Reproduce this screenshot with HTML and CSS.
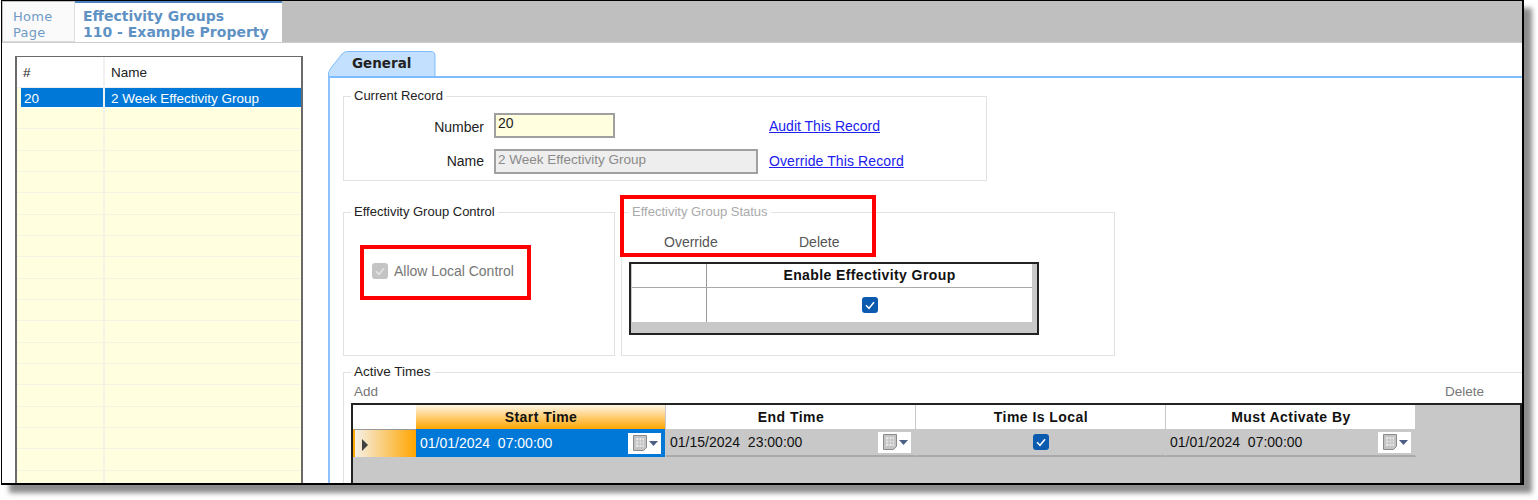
FILE: index.html
```html
<!DOCTYPE html>
<html lang="en">
<head>
<meta charset="utf-8">
<title>Effectivity Groups</title>
<link rel="stylesheet" href="styles.css">
</head>
<body>
<div class="frame">
  <header class="topbar">
    <div class="doc-tab home">Home<br>Page</div>
    <div class="doc-tab active"><b>Effectivity Groups<br>110 - Example Property</b></div>
  </header>
  <div class="main">
    <aside class="list">
      <div class="list-row list-head"><span class="c1">#</span><span class="c2">Name</span></div>
      <div class="list-row selected"><span class="c1">20</span><span class="c2">2 Week Effectivity Group</span></div>
      <div class="list-row"></div><div class="list-row"></div><div class="list-row"></div><div class="list-row"></div>
      <div class="list-row"></div><div class="list-row"></div><div class="list-row"></div><div class="list-row"></div>
      <div class="list-row"></div><div class="list-row"></div><div class="list-row"></div><div class="list-row"></div>
      <div class="list-row"></div><div class="list-row"></div><div class="list-row"></div><div class="list-row"></div>
      <div class="list-row"></div><div class="list-row"></div>
    </aside>
    <section class="tabs">
      <div class="tab-strip"><div class="tab"><svg class="tab-shape" viewBox="0 0 108 27"><path d="M.5 27V22Q1 20 3 17L14 3Q16 .5 20 .5H103Q107 .5 107 5V27" fill="#c4e0ff" stroke="#7fbcff"/></svg><span class="tab-label">General</span></div></div>
      <div class="tab-page">
        <fieldset class="group record">
          <legend>Current Record</legend>
          <div class="record-grid">
            <label class="num-label">Number</label><div class="input num">20</div><a href="#">Audit This Record</a>
            <label>Name</label><div class="input name">2 Week Effectivity Group</div><a class="wide-link" href="#">Override This Record</a>
          </div>
        </fieldset>
        <div class="pair">
          <fieldset class="group control">
            <legend>Effectivity Group Control</legend>
            <div class="allow">
              <span class="check off"><svg viewBox="0 0 16 16"><path d="M4 8.3l3 3 5-6" fill="none" stroke="#e4e4e4" stroke-width="1.5"/></svg></span>
              <span>Allow Local Control</span>
            </div>
            <div class="redbox box-allow"></div>
          </fieldset>
          <fieldset class="group status">
            <legend>Effectivity Group Status</legend>
            <div class="actions"><span>Override</span><span>Delete</span></div>
            <div class="grid small">
              <div class="g-head"><div class="g-corner"></div><div class="g-col wide">Enable Effectivity Group</div></div>
              <div class="g-row"><div class="g-rowhead"></div><div class="g-cell wide center"><span class="check on"><svg viewBox="0 0 16 16"><path d="M4 8.3l3 3 5-6" fill="none" stroke="#fff" stroke-width="1.5"/></svg></span></div></div>
            </div>
            <div class="redbox box-status"></div>
          </fieldset>
        </div>
        <fieldset class="group times">
          <legend>Active Times</legend>
          <div class="times-actions"><span>Add</span><span>Delete</span></div>
          <div class="grid big">
            <div class="g-head">
              <div class="g-corner b"></div>
              <div class="g-col t hot">Start Time</div>
              <div class="g-col t">End Time</div>
              <div class="g-col t">Time Is Local</div>
              <div class="g-col t">Must Activate By</div>
            </div>
            <div class="g-row">
              <div class="g-rowhead b hot-side"><svg viewBox="0 0 8 12"><path d="M1 0l6 6-6 6z" fill="#404040"/></svg></div>
              <div class="g-cell t date sel">01/01/2024&nbsp; 07:00:00<span class="cal"><svg viewBox="0 0 32 20"><path d="M5.500 2.500h13v12l-3 3h-10z" fill="#c4c4c4" stroke="#8a8a8a"/><path d="M8 5h8v9H8z" fill="#e6e6e6"/><path d="M8 8h8M8 11h8M11 5v9M14 5v9" stroke="#b0b0b0" stroke-width=".7"/><path d="M21 8h9l-4.500 5z" fill="#4d5f85"/></svg></span></div>
              <div class="g-cell t date">01/15/2024&nbsp; 23:00:00<span class="cal"><svg viewBox="0 0 32 20"><path d="M5.500 2.500h13v12l-3 3h-10z" fill="#c4c4c4" stroke="#8a8a8a"/><path d="M8 5h8v9H8z" fill="#e6e6e6"/><path d="M8 8h8M8 11h8M11 5v9M14 5v9" stroke="#b0b0b0" stroke-width=".7"/><path d="M21 8h9l-4.500 5z" fill="#4d5f85"/></svg></span></div>
              <div class="g-cell t center"><span class="check on"><svg viewBox="0 0 16 16"><path d="M4 8.3l3 3 5-6" fill="none" stroke="#fff" stroke-width="1.5"/></svg></span></div>
              <div class="g-cell t date">01/01/2024&nbsp; 07:00:00<span class="cal"><svg viewBox="0 0 32 20"><path d="M5.500 2.500h13v12l-3 3h-10z" fill="#c4c4c4" stroke="#8a8a8a"/><path d="M8 5h8v9H8z" fill="#e6e6e6"/><path d="M8 8h8M8 11h8M11 5v9M14 5v9" stroke="#b0b0b0" stroke-width=".7"/><path d="M21 8h9l-4.500 5z" fill="#4d5f85"/></svg></span></div>
            </div>
          </div>
        </fieldset>
      </div>
    </section>
  </div>
</div>
</body>
</html>
```
FILE: styles.css
```css
* { box-sizing: border-box; }
html, body { margin: 0; height: 500px; background: #fff; overflow: hidden; }
body { font: 14px/16px "Liberation Sans", Arial, sans-serif; color: #222; }

.frame {
  width: 1523px; height: 485px; margin-left: 1px;
  border: 1px solid #000; border-width: 1px 2px 2px 1px;
  background: #fff; overflow: hidden;
  box-shadow: 8px 8px 5px rgba(0,0,0,.45);
}

.topbar { display: flex; height: 42px; background: #bfbfbf; border-bottom: 1px solid #ccc; padding-left: 1px; align-items: flex-end; }
.doc-tab { font: 13px/16px "DejaVu Sans", sans-serif; color: #6f9ac6; }
.home { width: 72px; height: 40px; background: #fafafa; padding: 7px 0 0 10px; border-right: 1px solid #ddd; border-bottom: 1px solid #ddd; letter-spacing: .3px; }
.active { width: 207px; height: 42px; background: #fff; border-top: 3px solid #4a83bd; padding: 5px 0 0 8px; font-size: 14px; }
.active b { color: #5f92c4; font-weight: 700; }

.main { display: flex; height: 441px; }

.list { width: 288px; margin: 13px 0 0 13px; border: 2px solid #6a6a6a; border-top-width: 1px; border-bottom: 0; height: 429px; overflow: hidden; background: #ffffdf; flex: none; font-size: 13.500px; }
.list-row { display: grid; grid-template-columns: 88px 1fr; height: 21.33px; border-bottom: 1px solid #f3f3e6; }
.list-row:not(.list-head):not(.selected) { background: linear-gradient(90deg, transparent 86px, #f3f3e6 86px, #f3f3e6 88px, transparent 88px); }
.list-head { height: 31px; background: #fff; border-bottom: 1px solid #eee; align-items: center; }
.list-row > span { display: block; }
.c1 { padding-left: 6px; border-right: 2px solid #f1f1f1; height: 100%; line-height: 31px; }
.c2 { padding-left: 6px; line-height: 31px; height: 100%; }
.selected { background: #0078d7; color: #fff; margin-left: 4px; height: 20px; grid-template-columns: 84px 1fr; border-bottom: 1px solid #fff; }
.selected span { line-height: 21px; padding-left: 3px; }
.selected .c2 { padding-left: 6px; }

.tabs { margin-left: 25px; flex: 1; min-width: 0; overflow: hidden; }
.tab-strip { height: 34px; padding-top: 8px; }
.tab { position: relative; width: 108px; height: 27px; font: 700 13.500px/24px "DejaVu Sans", sans-serif; color: #222; padding-left: 24px; }
.tab-shape { position: absolute; left: 0; top: 0; width: 108px; height: 27px; }
.tab-label { position: relative; }
.tab-page { position: relative; border-top: 2px solid #7fbcff; border-left: 2px solid #8cc2ff; padding: 10px 0 0 13px; height: 407px; margin-top: -1px; width: 1300px; }

.group { border: 1px solid #e2e2e2; margin: 0; padding: 0; position: relative; min-width: 0; }
.group legend { padding: 0 3px; margin-left: 7px; line-height: 16px; font-size: 13px; }
.record { width: 644px; height: 93px; }
.record-grid { display: grid; grid-template-columns: 150px 120px 144px 1fr; grid-template-rows: 25px 26px; row-gap: 10px; padding-top: 9px; align-items: center; }
.record-grid label { text-align: right; padding-right: 10px; }
.record-grid .num-label { padding-top: 2px; }
.input { border: 2px solid #a0a0a0; height: 25px; padding-left: 2px; line-height: 17px; }
.num { background: #ffffdf; width: 121px; }
.name { background: #eee; color: #8a8a8a; width: 264px; grid-column: 2 / 4; font-size: 13.500px; }
.record-grid a { color: #2020ee; margin-left: 11px; }
.record-grid .wide-link { letter-spacing: .1px; }
.record-grid .input.num { grid-column: 2 / 4; }

.pair { display: flex; gap: 6px; margin-top: 23px; }
.control { width: 272px; height: 152px; }
.status { width: 494px; height: 152px; }
.status legend { color: #aaa; }
.allow { display: flex; align-items: center; gap: 6px; padding: 43px 0 0 28px; color: #777; }
.check { display: inline-flex; width: 16px; height: 16px; border-radius: 3px; }
.check svg { width: 16px; height: 16px; }
.check.off { background: #c4c4c4; }
.check.on { background: #0a5bb0; }

.redbox { position: absolute; border: 4px solid #f00; pointer-events: none; z-index: 2; }
.box-allow { left: 16px; top: 25px; width: 171px; height: 55px; }
.box-status { left: -2px; top: -25px; width: 256px; height: 62px; }

.actions { display: flex; color: #555; padding: 14px 0 0 42px; height: 42px; }
.actions span:first-child { width: 135px; }

.grid { background: #c8c8c8; border: 2px solid #222; overflow: hidden; }
.g-head, .g-row { display: flex; }
.small { width: 410px; height: 73px; margin-left: 7px; }
.small .g-head { height: 24px; background: #fff; width: 400px; margin-left: 1px; border-bottom: 1px solid #aaa; }
.small .g-corner { width: 75px; border-right: 1px solid #999; }
.small .g-col { flex: 1; text-align: center; font-weight: 700; line-height: 23px; color: #111; letter-spacing: .4px; }
.small .g-row { height: 34px; background: #fff; width: 400px; margin-left: 1px; }
.small .g-rowhead { width: 75px; border-right: 1px solid #999; }
.small .g-cell { flex: 1; display: flex; justify-content: center; align-items: center; }

.times { width: 1200px; height: 130px; margin-top: 8px; }
.times legend { font-size: 13.500px; }
.times-actions { display: flex; justify-content: space-between; color: #777; width: 1130px; margin-left: 10px; height: 16px; margin-top: 4px; font-size: 13.500px; }
.big { width: 1171px; height: 90px; margin: 3px 0 0 7px; }
.big .g-head { height: 24px; }
.big .g-row { height: 28px; }
.b { width: 63px; background: #fff; flex: none; }
.t { width: 250px; flex: none; background: #fff; text-align: center; font-weight: 700; line-height: 24px; color: #111; border-right: 1px solid #c8c8c8; }
.g-col.t { letter-spacing: .45px; padding-left: 1px; }
.hot { background: linear-gradient(#fff6e6, #ffa500); }
.hot-side { background: linear-gradient(90deg, #f5f0e6, #ffa500); border-left: 2px solid #ffa500; padding: 9px 0 0 6px; border-top: 1px solid #999; }
.hot-side svg { display: block; width: 8px; height: 12px; }
.g-cell.t { background: #c8c8c8; font-weight: 400; border-bottom: 2px solid #aaa; }
.g-cell.t.date { display: flex; justify-content: space-between; align-items: center; padding: 0 4px 0 4px; line-height: 26px; }
.g-cell.t.sel { background: #0078d7; color: #fff; border-bottom: 0; }
.g-cell.t.center { display: flex; justify-content: center; align-items: center; }
.cal { width: 33px; height: 21px; background: #fff; display: block; flex: none; }
.cal svg { display: block; width: 32px; height: 20px; }
```
